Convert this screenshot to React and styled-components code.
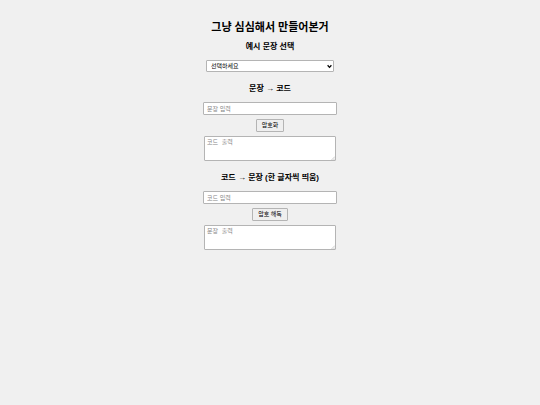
import React, { useState } from "react";
import styled, { createGlobalStyle, css } from "styled-components";

const GlobalStyle = createGlobalStyle`
	*{
		box-sizing: border-box;
	}
	body{
		margin: 0;
		background: #f0f0f0;
		color: #000;
		font-family: "Liberation Sans", "Noto Sans CJK KR", sans-serif;
	}
`

const Page = styled.main`
	display: flex;
	flex-direction: column;
	align-items: center;
	padding: 20px 16px;
`

const Title = styled.h1`
	margin: 0 0 6px;
	font-size: 11px;
	line-height: 14px;
	font-weight: 700;
	text-align: center;
`

const Heading = styled.h2`
	margin: 0;
	font-size: 8px;
	line-height: 14px;
	font-weight: 700;
	text-align: center;
`

const Section = styled.section`
	display: flex;
	flex-direction: column;
	align-items: center;
	gap: 4px;
	width: 100%;
	margin-bottom: ${props => props.$last ? "0" : "10px"};
	${Heading}{
		margin-bottom: 2px;
	}
`

const field = css`
	display: block;
	margin: 0;
	border: 1px solid #b4b4b4;
	border-radius: 1px;
	background: #fff;
	color: #000;
	font-family: inherit;
	font-size: 6px;
	outline: none;
	&::placeholder{
		color: #858585;
		opacity: 1;
	}
`

const SelectBox = styled.div`
	position: relative;
	width: 100%;
	max-width: 128px;
`

const Select = styled.select`
	${field}
	appearance: none;
	width: 100%;
	height: 12px;
	padding: 0 10px 0 4px;
	line-height: 10px;
`

const Chevron = styled.svg`
	position: absolute;
	right: 2px;
	top: 4px;
	width: 5px;
	height: 5px;
	pointer-events: none;
`

const Input = styled.input`
	${field}
	width: 100%;
	max-width: 134px;
	height: 13px;
	padding: 0 3px;
	line-height: 11px;
`

const Output = styled.textarea`
	${field}
	width: 100%;
	height: 25px;
	padding: 2px;
	line-height: 8px;
	font-family: "Liberation Mono", "Noto Sans CJK KR", monospace;
	resize: none;
`

const OutputBox = styled.div`
	position: relative;
	width: 100%;
	max-width: 132px;
`

const Grip = styled.svg`
	position: absolute;
	right: 1px;
	bottom: 1px;
	width: 4px;
	height: 4px;
	pointer-events: none;
`

const Button = styled.button`
	height: 13px;
	padding: 0 5px;
	border: 1px solid #b4b4b4;
	border-radius: 1px;
	background: #efefef;
	color: #000;
	font-family: inherit;
	font-size: 6px;
	line-height: 11px;
	cursor: pointer;
`

const examples = ["안녕하세요", "만나서 반갑습니다", "오늘도 좋은 하루"];

const encode = text => Array.from(text).map(c => c.codePointAt(0).toString(16)).join(" ");

const decode = code => code
	.split(/\s+/)
	.map(part => parseInt(part, 16))
	.filter(n => n > 0 && n <= 0x10ffff)
	.map(n => String.fromCodePoint(n))
	.join(" ");

const Converter = ({ title, inputLabel, outputLabel, action, value, onChange, convert, last }) => {
	const [output, setOutput] = useState("");
	return (
		<Section $last={last}>
			<Heading>{title}</Heading>
			<Input
				type="text"
				aria-label={inputLabel}
				placeholder={inputLabel}
				value={value}
				onChange={e => onChange(e.target.value)}
			/>
			<Button type="button" onClick={() => setOutput(convert(value))}>{action}</Button>
			<OutputBox>
				<Output aria-label={outputLabel} placeholder={outputLabel} value={output} readOnly />
				<Grip viewBox="0 0 4 4" aria-hidden="true">
					<path d="M0.5 4 4 0.5M2.5 4 4 2.5" stroke="#999" strokeWidth="0.5" />
				</Grip>
			</OutputBox>
		</Section>
	)
}

const App = () => {
	const [sentence, setSentence] = useState("");
	const [code, setCode] = useState("");
	return (
		<>
			<GlobalStyle />
			<Page>
				<Title>그냥 심심해서 만들어본거</Title>
				<Section>
					<Heading id="example-heading">예시 문장 선택</Heading>
					<SelectBox>
						<Select
							aria-labelledby="example-heading"
							value={sentence}
							onChange={e => setSentence(e.target.value)}
						>
							<option value="">선택하세요</option>
							{examples.map(text => <option key={text} value={text}>{text}</option>)}
						</Select>
						<Chevron viewBox="0 0 4 4" aria-hidden="true">
							<path d="M0.5 1 2 2.7 3.5 1" fill="none" stroke="#000" />
						</Chevron>
					</SelectBox>
				</Section>
				<Converter
					title="문장 → 코드"
					inputLabel="문장 입력"
					outputLabel="코드 출력"
					action="암호화"
					value={sentence}
					onChange={setSentence}
					convert={encode}
				/>
				<Converter
					title="코드 → 문장 (한 글자씩 띄움)"
					inputLabel="코드 입력"
					outputLabel="문장 출력"
					action="암호 해독"
					value={code}
					onChange={setCode}
					convert={decode}
					last
				/>
			</Page>
		</>
	)
}

export default App
